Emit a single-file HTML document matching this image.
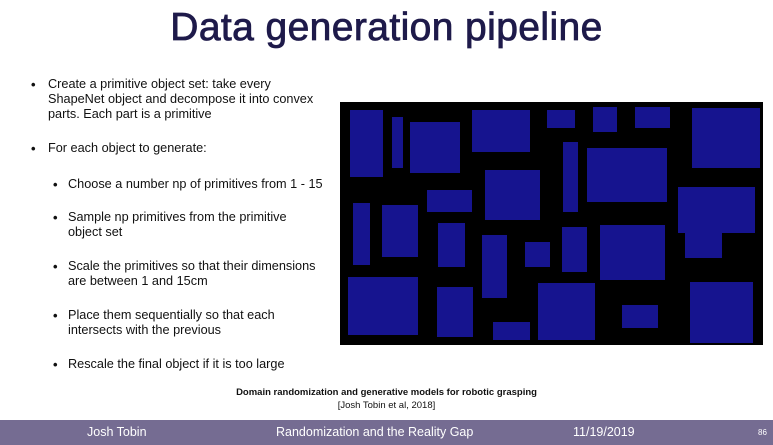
<!DOCTYPE html>
<html><head><meta charset="utf-8"><style>
body{margin:0;width:773px;height:445px;background:#fff;position:relative;overflow:hidden;font-family:"Liberation Sans",Arial,sans-serif;}
.t{position:absolute;font-size:12.7px;color:#111;white-space:nowrap;line-height:15px;}
.b{position:absolute;font-size:13px;color:#111;font-weight:bold;}
h1{position:absolute;left:0;width:773px;top:6px;margin:0;text-align:center;font-size:39px;font-weight:normal;color:#1e1a4a;-webkit-text-stroke:0.8px #1e1a4a;letter-spacing:0.4px;}
#img{position:absolute;left:340px;top:102px;width:423px;height:243px;background:#000;}
#img div{position:absolute;background:#16148f;}
.foot{position:absolute;left:0;top:420px;width:773px;height:25px;background:#756c92;color:#fff;font-size:12.5px;}
.foot span{position:absolute;top:5px;}
</style></head><body>
<h1>Data generation pipeline</h1>
<div class="b" style="left:31px;top:77px">•</div>
<div class="t" style="left:48px;top:77px">Create a primitive object set: take every<br>ShapeNet object and decompose it into convex<br>parts. Each part is a primitive</div>
<div class="b" style="left:31px;top:141px">•</div>
<div class="t" style="left:48px;top:141px">For each object to generate:</div>
<div class="b" style="left:53px;top:177px">•</div>
<div class="t" style="left:68px;top:177px">Choose a number np of primitives from 1 - 15</div>
<div class="b" style="left:53px;top:210px">•</div>
<div class="t" style="left:68px;top:210px">Sample np primitives from the primitive<br>object set</div>
<div class="b" style="left:53px;top:259px">•</div>
<div class="t" style="left:68px;top:259px">Scale the primitives so that their dimensions<br>are between 1 and 15cm</div>
<div class="b" style="left:53px;top:308px">•</div>
<div class="t" style="left:68px;top:308px">Place them sequentially so that each<br>intersects with the previous</div>
<div class="b" style="left:53px;top:357px">•</div>
<div class="t" style="left:68px;top:357px">Rescale the final object if it is too large</div>
<div id="img">
<div style="left:10px;top:8px;width:33px;height:67px"></div>
<div style="left:52px;top:15px;width:11px;height:51px"></div>
<div style="left:70px;top:20px;width:50px;height:51px"></div>
<div style="left:132px;top:8px;width:58px;height:42px"></div>
<div style="left:207px;top:8px;width:28px;height:18px"></div>
<div style="left:253px;top:5px;width:24px;height:25px"></div>
<div style="left:295px;top:5px;width:35px;height:21px"></div>
<div style="left:352px;top:6px;width:68px;height:60px"></div>
<div style="left:223px;top:40px;width:15px;height:70px"></div>
<div style="left:247px;top:46px;width:80px;height:54px"></div>
<div style="left:87px;top:88px;width:45px;height:22px"></div>
<div style="left:145px;top:68px;width:55px;height:50px"></div>
<div style="left:338px;top:85px;width:77px;height:46px"></div>
<div style="left:345px;top:131px;width:37px;height:25px"></div>
<div style="left:13px;top:101px;width:17px;height:62px"></div>
<div style="left:42px;top:103px;width:36px;height:52px"></div>
<div style="left:98px;top:121px;width:27px;height:44px"></div>
<div style="left:142px;top:133px;width:25px;height:63px"></div>
<div style="left:185px;top:140px;width:25px;height:25px"></div>
<div style="left:222px;top:125px;width:25px;height:45px"></div>
<div style="left:260px;top:123px;width:65px;height:55px"></div>
<div style="left:8px;top:175px;width:70px;height:58px"></div>
<div style="left:97px;top:185px;width:36px;height:50px"></div>
<div style="left:153px;top:220px;width:37px;height:18px"></div>
<div style="left:198px;top:181px;width:57px;height:57px"></div>
<div style="left:282px;top:203px;width:36px;height:23px"></div>
<div style="left:350px;top:180px;width:63px;height:61px"></div>
</div>
<div style="position:absolute;left:0;top:387px;width:773px;text-align:center;font-size:9.5px;font-weight:bold;color:#111">Domain randomization and generative models for robotic grasping</div>
<div style="position:absolute;left:0;top:400px;width:773px;text-align:center;font-size:9.5px;color:#111">[Josh Tobin et al, 2018]</div>
<div class="foot"><span style="left:87px">Josh Tobin</span><span style="left:276px">Randomization and the Reality Gap</span><span style="left:573px">11/19/2019</span><span style="left:758px;font-size:8px;top:8px">86</span></div>
</body></html>
